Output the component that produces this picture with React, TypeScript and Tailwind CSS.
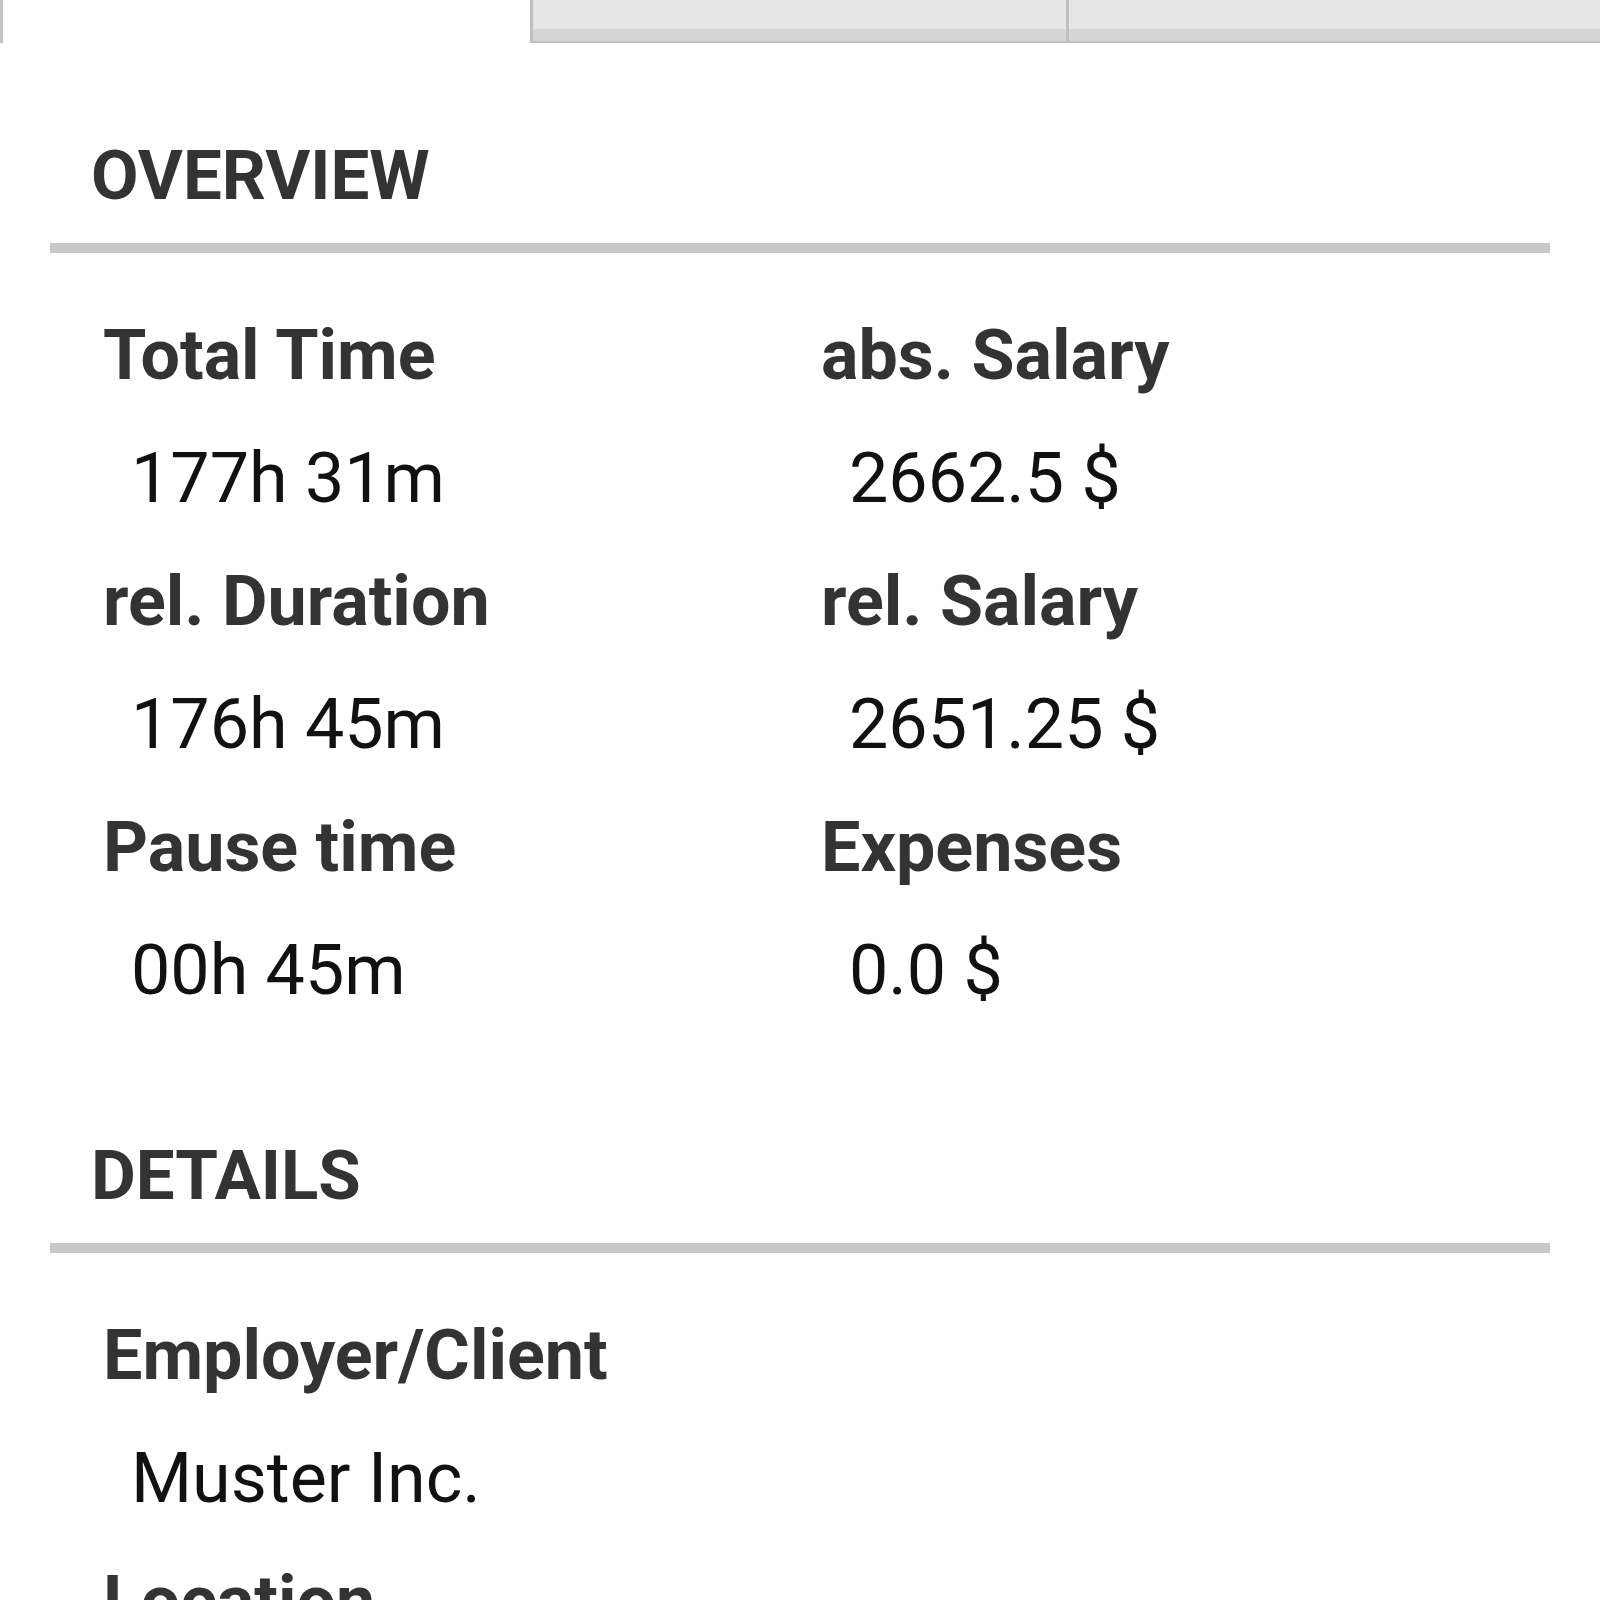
import React from 'react';

type Item = { label: string; value: string };

const overview: Item[][] = [
  [
    { label: 'Total Time', value: '177h 31m' },
    { label: 'abs. Salary', value: '2662.5 $' },
  ],
  [
    { label: 'rel. Duration', value: '176h 45m' },
    { label: 'rel. Salary', value: '2651.25 $' },
  ],
  [
    { label: 'Pause time', value: '00h 45m' },
    { label: 'Expenses', value: '0.0 $' },
  ],
];

const details: Item[] = [
  { label: 'Employer/Client', value: 'Muster Inc.' },
  { label: 'Location', value: '' },
];

const SectionHeader: React.FC<{ title: string; className?: string }> = ({ title, className }) => (
  <div className={className}>
    <div className="pl-[91px] text-[69px] leading-[80px] font-bold text-[#333333]">{title}</div>
    <div className="mx-[50px] mt-[27px] h-[10px] bg-[#c8c8c8]" />
  </div>
);

const Field: React.FC<Item> = ({ label, value }) => (
  <div>
    <div className="text-[70px] leading-[123px] font-bold text-[#333333] whitespace-nowrap">{label}</div>
    <div className="pl-[28px] text-[70px] leading-[123px] text-[#111111] whitespace-nowrap">{value || '\u00a0'}</div>
  </div>
);

export default function App() {
  return (
    <div
      className="w-[1600px] h-[1600px] overflow-hidden bg-white"
      style={{ fontFamily: 'Roboto, "Noto Sans", sans-serif' }}
    >
      {/* tabs */}
      <div className="flex h-[43px]">
        <div className="w-[530px] bg-white border-l-[3px] border-[#c4c4c4]" />
        <div className="w-[536px] flex flex-col bg-[#e6e6e6] border-l-[3px] border-b-[2px] border-[#bfbfbf]">
          <div className="flex-1" />
          <div className="h-[12px] bg-[#d6d6d6]" />
        </div>
        <div className="flex-1 flex flex-col bg-[#e6e6e6] border-l-[3px] border-b-[2px] border-[#bfbfbf]">
          <div className="flex-1" />
          <div className="h-[12px] bg-[#d6d6d6]" />
        </div>
      </div>

      <SectionHeader title="OVERVIEW" className="mt-[93px]" />

      <div className="mt-[41px] pl-[103px] grid grid-cols-[718px_1fr]">
        {overview.map((row, i) => (
          <React.Fragment key={i}>
            {row.map((it) => (
              <Field key={it.label} {...it} />
            ))}
          </React.Fragment>
        ))}
      </div>

      <SectionHeader title="DETAILS" className="mt-[104px]" />

      <div className="mt-[41px] pl-[103px]">
        {details.map((it) => (
          <Field key={it.label} {...it} />
        ))}
      </div>
    </div>
  );
}
